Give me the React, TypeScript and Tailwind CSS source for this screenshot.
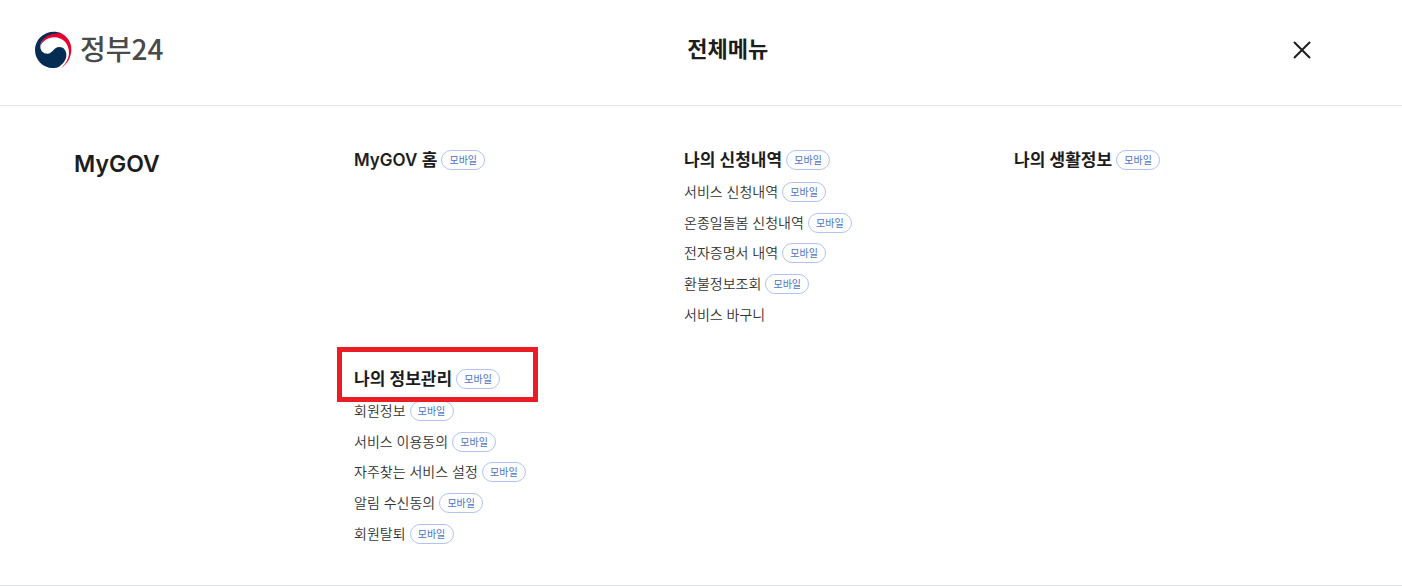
import React from "react";

type Item = { label: string; mobile?: boolean };
type Group = { title: Item; items: Item[]; highlight?: boolean };

const groups: Group[] = [
  { title: { label: "MyGOV 홈", mobile: true }, items: [] },
  {
    title: { label: "나의 신청내역", mobile: true },
    items: [
      { label: "서비스 신청내역", mobile: true },
      { label: "온종일돌봄 신청내역", mobile: true },
      { label: "전자증명서 내역", mobile: true },
      { label: "환불정보조회", mobile: true },
      { label: "서비스 바구니" },
    ],
  },
  { title: { label: "나의 생활정보", mobile: true }, items: [] },
  {
    title: { label: "나의 정보관리", mobile: true },
    highlight: true,
    items: [
      { label: "회원정보", mobile: true },
      { label: "서비스 이용동의", mobile: true },
      { label: "자주찾는 서비스 설정", mobile: true },
      { label: "알림 수신동의", mobile: true },
      { label: "회원탈퇴", mobile: true },
    ],
  },
];

function Emblem() {
  return (
    <svg viewBox="6 9 114 114" className="size-[38px]" aria-hidden="true">
      <path
        d="M88 16C75 10 58 10 45 15C24 23 9 43 9 66C9 96 33 120 62 120C69 120 75 119 81 116C94 108 103 95 103 81C103 67 95 57 82 57C65 57 63 77 46 77C34 77 25 68 25 56C25 36 44 20 88 18Z"
        fill="#052c52"
      />
      <path
        d="M25 56C27 34 46 18 68 17C75 16 81 15 86 15C105 23 118 42 118 64C118 88 106 109 87 120C101 108 111 91 111 74C111 47 92 28 67 28C47 28 31 39 25 56Z"
        fill="#e4032e"
      />
    </svg>
  );
}

function Badge() {
  return (
    <span className="flex h-5 w-11 shrink-0 items-center justify-center rounded-full border border-[#b1c3f5] text-[10px] leading-4 font-normal text-[#4a72c4]">
      모바일
    </span>
  );
}

function MenuGroup({ group }: { group: Group }) {
  return (
    <section>
      <h3 className="relative flex h-6 items-center gap-1 text-[17px] font-semibold text-[#1d1d1d]">
        <a href="#" className="pt-0.5 whitespace-nowrap">{group.title.label}</a>
        {group.title.mobile && <Badge />}
        {group.highlight && (
          <span className="pointer-events-none absolute -top-5 -left-[17px] h-[55px] w-[201px] border-[5px] border-[#ec1c24]" />
        )}
      </h3>
      {group.items.length > 0 && (
        <ul className="mt-[5px] grid min-h-[153px] auto-rows-fr">
          {group.items.map((item) => (
            <li key={item.label} className="flex items-center gap-1 text-sm font-[350] text-[#333]">
              <a href="#" className="whitespace-nowrap">{item.label}</a>
              {item.mobile && <Badge />}
            </li>
          ))}
        </ul>
      )}
    </section>
  );
}

export default function App() {
  return (
    <div className="bg-white font-['Inter','Noto_Sans_CJK_KR',sans-serif] text-[#1d1d1d]">
      <header className="flex h-[106px] items-center justify-between border-b border-[#e4e4e4] pb-[6px] pl-[34px] pr-[90px]">
        <a href="#" className="flex items-center gap-2">
          <Emblem />
          <span className="pb-1 font-['Noto_Sans_CJK_KR',sans-serif] text-[28px] leading-9 font-medium text-[#4a4a4c]">정부24</span>
        </a>
        <h1 className="text-[22px] font-semibold">전체메뉴</h1>
        <button type="button" aria-label="닫기">
          <svg viewBox="0 0 20 20" className="size-5" stroke="#1d1d1d" strokeWidth="2">
            <path d="M2 2l16 16M18 2L2 18" />
          </svg>
        </button>
      </header>
      <main className="flex border-b border-[#e0e0e8] pt-[42px] pr-[58px] pb-9 pl-[74px]">
        <h2 className="w-[280px] shrink-0 text-[23px] leading-8 font-semibold">MyGOV</h2>
        <div className="grid grow grid-cols-3 gap-y-[37px]">
          {groups.map((g) => (
            <MenuGroup key={g.title.label} group={g} />
          ))}
        </div>
      </main>
    </div>
  );
}
